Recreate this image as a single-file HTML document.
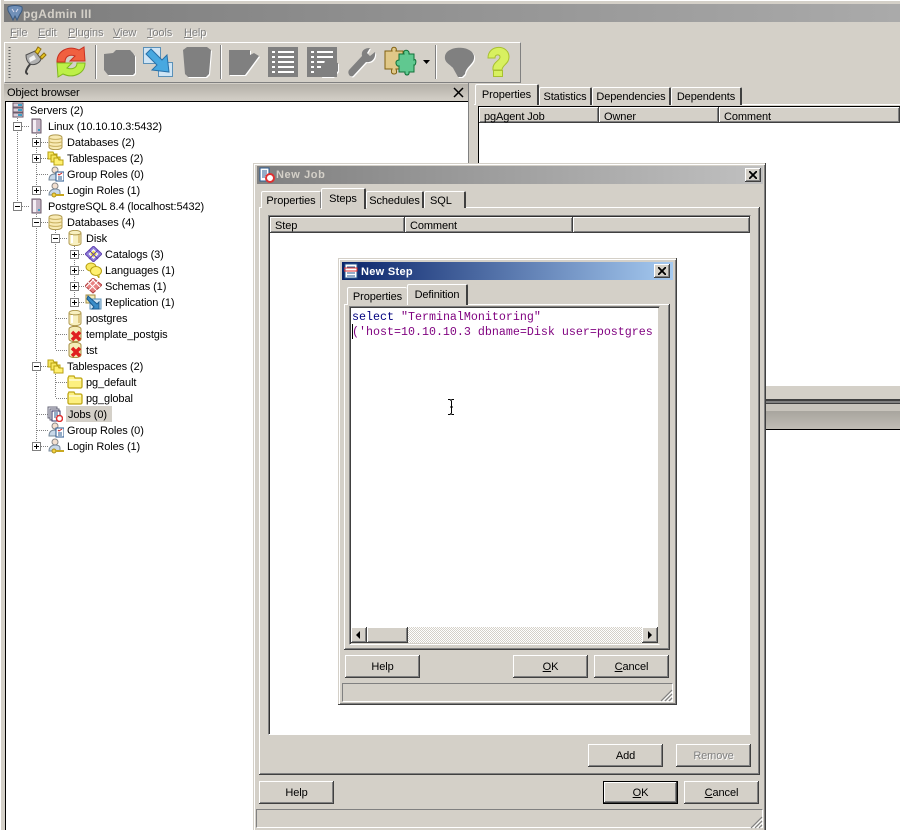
<!DOCTYPE html>
<html><head><meta charset="utf-8"><style>
html,body{margin:0;padding:0;background:#d4d0c8}
#p{position:relative;width:900px;height:830px;overflow:hidden;background:#d4d0c8;font:11px/16px "Liberation Sans",sans-serif;letter-spacing:-.1px;color:#000}
#p div,#p svg{position:absolute;box-sizing:border-box}
.t{white-space:nowrap;height:16px;margin-top:1px}
.r{background:#d4d0c8;box-shadow:inset -1px -1px #404040,inset 1px 1px #fff,inset -2px -2px #808080}
.b{background:#d4d0c8;box-shadow:inset -1px -1px #404040,inset 1px 1px #fff,inset -2px -2px #808080;text-align:center;line-height:24px;width:75px;height:23px}
.h{background:#d4d0c8;box-shadow:inset -1px -1px #404040,inset 1px 1px #fff,inset -2px -2px #808080;height:16px;line-height:19px;padding-left:5px;white-space:nowrap}
.tab{background:#d4d0c8;border-top:1px solid #fff;border-left:1px solid #fff;border-right:2px solid #404040;border-radius:2px 2px 0 0;text-align:center;white-space:nowrap;line-height:18px}
.w{background:#fff}
.win{background:#d4d0c8;box-shadow:inset -1px -1px #404040,inset 1px 1px #d4d0c8,inset 2px 2px #fff,inset -2px -2px #808080}
.x{width:16px;height:14px;background:#d4d0c8;box-shadow:inset -1px -1px #404040,inset 1px 1px #fff,inset -2px -2px #808080}
u{text-decoration:underline}
.sb{height:19px;border-top:1px solid #808080;border-left:1px solid #808080;border-right:1px solid #fff;border-bottom:1px solid #fff}
.m{color:#808080;text-shadow:1px 1px 0 #fff}
</style></head><body><div id="p">

<svg width="0" height="0" style="left:0;top:0">
<defs>
<symbol id="srvs" viewBox="0 0 16 16"><path d="M3 1h10v4H3zM3 6h10v4H3zM3 11h10v4H3z" fill="#d8ccd8" stroke="#6a5a6a"/><path d="M8 3h4M8 8h4M8 13h4" stroke="#3aa0c8" stroke-width="2"/></symbol>
<symbol id="srv" viewBox="0 0 16 16"><path d="M3 1h8l1 1v13H3z" fill="#c4b4c4" stroke="#6a5a6a"/><path d="M4 2h3v12H4z" fill="#f4eef4"/><path d="M9 11h2v2H9z" fill="#3aa0c8"/></symbol>
<symbol id="db" viewBox="0 0 16 16"><path d="M1 3.500C1 0 14 0 14 3.500V13c0 3.500-13 3.500-13 0z" fill="#f8eab4" stroke="#b09a50"/><path d="M1 7c0 2.500 13 2.500 13 0M1 10.500c0 2.500 13 2.500 13 0M1 3.500c0 2.500 13 2.500 13 0" fill="none" stroke="#c8b060"/></symbol>
<symbol id="d1" viewBox="0 0 16 16"><path d="M2 3C2-.5 14-.5 14 3v10c0 3.500-12 3.500-12 0z" fill="#f8f0c0" stroke="#b09a50"/><path d="M2 3c0 2.500 12 2.500 12 0" fill="none" stroke="#b09a50"/><path d="M5 5v8" stroke="#fff" stroke-width="2"/><path d="M12 5v8" stroke="#e0c880" stroke-width="2"/></symbol>
<symbol id="fs" viewBox="0 0 17 16"><path d="M1 2h5l1 2h3v5H1z" fill="#f8e860" stroke="#b8a010"/><path d="M4 5h5l1 2h3v5H4z" fill="#f8e860" stroke="#b8a010"/><path d="M7 8h4l1 2h4v5H7z" fill="#fff070" stroke="#b8a010"/></symbol>
<symbol id="f" viewBox="0 0 16 16"><path d="M1 4l1-2h5l1 2h6l1 1v8l-1 1H2l-1-1z" fill="#fdf080" stroke="#c0a818" stroke-width="1.300"/><path d="M2 6h12" stroke="#fff"/></symbol>
<symbol id="grp" viewBox="0 0 16 16"><circle cx="7" cy="4" r="3" fill="#f4e0d0" stroke="#888"/><path d="M1 14c0-5 3-6 6-6s5 1 5 3v3z" fill="#c8d8e8" stroke="#789"/><path d="M8 6h8v9H8z" fill="#fff" stroke="#2a5a90"/><path d="M10 8l1 1 3-2" stroke="#d02020" fill="none"/><path d="M10 11h4M10 13h4" stroke="#2a5a90"/></symbol>
<symbol id="log" viewBox="0 0 16 16"><circle cx="7" cy="4" r="3" fill="#f4e0d0" stroke="#888"/><path d="M1 13c0-4 3-6 6-6s5 1 5 3v3z" fill="#c8d8e8" stroke="#789"/><circle cx="6" cy="13" r="2" fill="#f4d040" stroke="#a89020"/><path d="M8 13h8" stroke="#c8a820" stroke-width="2"/></symbol>
<symbol id="cat" viewBox="0 0 17 16"><path d="M8.500 0L17 8l-8.500 8L0 8z" fill="#9080d8" stroke="#6040b0"/><path d="M8.500 3l5 5-5 5-5-5z" fill="#fff"/><path d="M5 8l3.500-3.500L12 8l-3.500 3.500z" fill="#f0e040"/><path d="M4 4l9 9M13 4l-9 9" stroke="#6040b0"/></symbol>
<symbol id="lng" viewBox="0 0 17 16"><ellipse cx="6" cy="5" rx="5" ry="4" fill="#f8e860" stroke="#b8a010"/><ellipse cx="11" cy="9" rx="5.500" ry="4.500" fill="#fff070" stroke="#b8a010"/><path d="M12 13l2 3 0-3" fill="#fff070" stroke="#b8a010"/></symbol>
<symbol id="sch" viewBox="0 0 17 16"><path d="M8 0l9 7-9 8-8-7z" fill="#e88080" stroke="#b04040"/><path d="M3 4l9 9M7 1l8 8M13 3l-9 9M9 1L1 9" stroke="#fff"/></symbol>
<symbol id="rep" viewBox="0 0 17 16"><path d="M1 1h9v8H1z" fill="#f4ecb8" stroke="#a68c40"/><path d="M5 5h11v10H5z" fill="#cfe4f4" stroke="#5a90b8"/><path d="M3 2l9 8 2-2v7H7l2-2-7-8z" fill="#3a8cc8" stroke="#1a5a90"/></symbol>
<symbol id="bad" viewBox="0 0 16 16"><path d="M2 3C2-.5 14-.5 14 3v10c0 3.500-12 3.500-12 0z" fill="#f4ecb8" stroke="#a68c40"/><path d="M5 6l8 8M13 6l-8 8" stroke="#e02020" stroke-width="3.500"/></symbol>
<symbol id="job" viewBox="0 0 16 16"><path d="M1 1h9v11H1z" fill="#e8e8f0" stroke="#667"/><path d="M3 3h9v11H3z" fill="#e8e8f0" stroke="#667"/><path d="M5 5h8v10H5z" fill="#fff" stroke="#336"/><path d="M7 7h4M7 9h4M7 11h2" stroke="#2a5a90"/><circle cx="12.500" cy="12.500" r="3" fill="#fff" stroke="#e03030" stroke-width="1.500"/></symbol>
<path id="tb1" d="M104 54l9-1 3-3h14l3 3 2 3v17l-2 2H108l-4-5z"/>
<path id="tb2" d="M183 50l4-3h20l4 3-2 24-3 3h-18l-3-3z"/>
<path id="tb3" d="M229 50h21v5l4-2 5 3-11 15-3 4h-16z"/>
<path id="tb4" d="M349 70l13-14c-1-5 2-8 8-8l-3 5 3 3 5-4c1 6-3 11-9 10l-13 14c-3 2-6-3-4-6z"/>
<path id="tb5" d="M445 56C447 45 472 45 474 56 475 64 466 66 465 74L462 77H458L453 68C449 64 444 62 445 56z"/>
<path id="tb6" d="M325 60l13 3v8l-5 6h-12z"/>
</defs>
</svg>

<!-- main title -->
<div style="left:0;top:0;width:900px;height:4px;background:#d4d0c8;border-top:1px solid #fff"></div>
<div style="left:0;top:0;width:4px;height:830px;background:#d4d0c8;border-left:1px solid #fff"></div>
<div style="left:4px;top:4px;width:896px;height:18px;background:linear-gradient(90deg,#7c7c7c,#aaa)"></div>
<svg style="left:6px;top:4px" width="18" height="18" viewBox="0 0 18 18"><path d="M2 3c3-2 11-2 14 0 1 5-2 6-3 9l-2 4-2-4-2 4-2-4C4 9 1 8 2 3z" fill="#7090b8" stroke="#3a5a80"/><path d="M6 5l2 3M12 5l-2 3" stroke="#dde"/></svg>
<div class="t" style="left:23px;top:5px;font-weight:bold;color:#d4d0c8;font-size:12px;letter-spacing:.3px">pgAdmin III</div>

<!-- menu -->
<div class="t m" style="left:10px;top:24px"><u>F</u>ile</div>
<div class="t m" style="left:38px;top:24px"><u>E</u>dit</div>
<div class="t m" style="left:68px;top:24px"><u>P</u>lugins</div>
<div class="t m" style="left:113px;top:24px"><u>V</u>iew</div>
<div class="t m" style="left:147px;top:24px"><u>T</u>ools</div>
<div class="t m" style="left:184px;top:24px"><u>H</u>elp</div>

<!-- toolbar -->
<div style="left:4px;top:42px;width:517px;height:41px;border-top:1px solid #fff;border-left:1px solid #fff;border-right:1px solid #808080;border-bottom:1px solid #808080"></div>
<svg style="left:0;top:42px" width="530" height="41" viewBox="0 42 530 41">
<path d="M9.500 47v31" stroke="#606060" stroke-width="2" stroke-dasharray="1 2"/>
<path d="M95.500 45v34M220.500 45v34M435.500 45v34" stroke="#808080"/><path d="M96.500 45v34M221.500 45v34M436.500 45v34" stroke="#fff"/>
<!-- plug -->
<path d="M28 74c-4-1-1-5 0-7l3-4" fill="none" stroke="#404040" stroke-width="2"/>
<path d="M26 55l9-4 6 8c-1 4-7 7-11 5-3-2-4-6-4-9z" fill="#b0b0b0" stroke="#505050"/><path d="M29 58l5-3 2 4-6 3z" fill="#f0f0f0"/>
<path d="M35 52l3-5 3 2-3 5zM40 57l4-4 2 2-4 4z" fill="#e8c820" stroke="#907010"/>
<!-- refresh -->
<path d="M57 62C57 51 68 45 79 50L84 47 85 61H70L75 56C70 54 65 56 65 62Z" fill="#f06040" stroke="#c83020"/>
<path d="M85 63C85 73 74 79 63 74L58 77 57 63H72L67 68C72 70 77 68 77 63Z" fill="#bdf048" stroke="#80b820"/>
<!-- disabled -->
<g fill="#fff" transform="translate(1 1)"><use href="#tb1"/><use href="#tb2"/><use href="#tb3"/><use href="#tb4"/><use href="#tb5"/><use href="#tb6"/></g>
<g fill="#808080"><use href="#tb1"/><use href="#tb2"/><use href="#tb3"/><use href="#tb4"/><use href="#tb5"/></g>
<!-- copy blue -->
<path d="M143.500 47.500h17v16h-17zM158.500 62.500h14v14h-14z" fill="#cfe4f4" stroke="#5a90b8"/>
<path d="M146 54l5-5 11 11 5-5 2 17-17-2 5-5z" fill="#48a8e0" stroke="#2870a8"/>
<!-- list -->
<rect x="268" y="47" width="30" height="30" fill="#808080"/>
<path d="M272 52h3M278 52h16M272 57h3M278 57h16M272 62h3M278 62h16M272 67h3M278 67h16M272 72h3M278 72h16" stroke="#fff" stroke-width="2"/>
<rect x="307" y="47" width="30" height="30" fill="#808080"/>
<path d="M311 52h3M317 52h16M311 57h3M317 57h16M311 62h3M317 62h8M311 67h3M317 67h4M311 72h3" stroke="#fff" stroke-width="2"/>
<use href="#tb6" fill="#808080"/>
<!-- puzzle -->
<path d="M385 51h7c-2-5 6-5 4 0h7v18h-7c1 3 1 5-2 5s-3-3-2-5h-7z" fill="#e0c888" stroke="#806010"/>
<path d="M399 54h5c-2-5 6-5 5 0h5v6c3-2 2 6 0 5v7h-5c1 4-5 4-4 0h-6v-6c-3 1-5-6 0-6z" fill="#60c890" stroke="#107038"/>
<path d="M423 60h7l-3.500 4z" fill="#000"/>
<!-- question -->
<path d="M488 58c0-14 21-14 21-1 0 7-7 8-7 13h-9c-1-8 7-9 7-13 0-3-5-3-5 1z" fill="#d8f060" stroke="#a8c030"/>
<rect x="493.500" y="70.500" width="9" height="6" fill="#d8f060" stroke="#a8c030"/>
</svg>

<!-- object browser header -->
<div style="left:4px;top:84px;width:465px;height:17px;background:linear-gradient(#b4b0a8,#d4d0c8)"></div>
<div class="t" style="left:7px;top:84px">Object browser</div>
<svg style="left:453px;top:87px" width="11" height="11" viewBox="0 0 11 11"><path d="M1 1l9 9M10 1l-9 9" stroke="#000" stroke-width="1.500"/></svg>

<!-- tree -->
<div class="w" style="left:5px;top:101px;width:463px;height:729px;border-top:1px solid #000;border-left:1px solid #000"></div>

<svg style="left:0;top:100px" width="260" height="360" viewBox="0 100 260 360">
<g stroke="#808080" stroke-dasharray="1 1" fill="none" shape-rendering="crispEdges">
<path d="M17.500 116v86M22 126.500h8M22 206.500h8M18 110.500h-1"/>
<path d="M36.500 132v54M41 142.500h7M41 158.500h7M37 174.500h11M41 190.500h7"/>
<path d="M36.500 212v230M41 222.500h7M41 366.500h7M37 414.500h11M37 430.500h11M41 446.500h7"/>
<path d="M55.500 228v122M60 238.500h7M56 318.500h11M56 334.500h11M56 350.500h11"/>
<path d="M55.500 372v26M56 382.500h11M56 398.500h11"/>
<path d="M74.500 244v58M79 254.500h6M79 270.500h6M79 286.500h6M79 302.500h6"/>
</g>
<g fill="#fff" stroke="#808080" shape-rendering="crispEdges">
<rect x="13.500" y="122.500" width="8" height="8"/><rect x="13.500" y="202.500" width="8" height="8"/>
<rect x="32.500" y="138.500" width="8" height="8"/><rect x="32.500" y="154.500" width="8" height="8"/><rect x="32.500" y="186.500" width="8" height="8"/>
<rect x="32.500" y="218.500" width="8" height="8"/><rect x="32.500" y="362.500" width="8" height="8"/><rect x="32.500" y="442.500" width="8" height="8"/>
<rect x="51.500" y="234.500" width="8" height="8"/>
<rect x="70.500" y="250.500" width="8" height="8"/><rect x="70.500" y="266.500" width="8" height="8"/><rect x="70.500" y="282.500" width="8" height="8"/><rect x="70.500" y="298.500" width="8" height="8"/>
</g>
<g stroke="#000" fill="none" shape-rendering="crispEdges">
<path d="M15 126.500h5M15 206.500h5M34 142.500h5M36.500 140v5M34 158.500h5M36.500 156v5M34 190.500h5M36.500 188v5M34 222.500h5M34 366.500h5M34 446.500h5M36.500 444v5M53 238.500h5"/>
<path d="M72 254.500h5M74.500 252v5M72 270.500h5M74.500 268v5M72 286.500h5M74.500 284v5M72 302.500h5M74.500 300v5"/>
</g>
<use href="#srvs" x="10" y="102" width="16" height="16"/>
<use href="#srv" x="29" y="118" width="16" height="16"/>
<use href="#db" x="48" y="134" width="16" height="16"/>
<use href="#fs" x="47" y="150" width="17" height="16"/>
<use href="#grp" x="48" y="166" width="16" height="16"/>
<use href="#log" x="48" y="182" width="16" height="16"/>
<use href="#srv" x="29" y="198" width="16" height="16"/>
<use href="#db" x="48" y="214" width="16" height="16"/>
<use href="#d1" x="67" y="230" width="16" height="16"/>
<use href="#cat" x="85" y="246" width="17" height="16"/>
<use href="#lng" x="85" y="262" width="17" height="16"/>
<use href="#sch" x="85" y="278" width="17" height="16"/>
<use href="#rep" x="85" y="294" width="17" height="16"/>
<use href="#d1" x="67" y="310" width="16" height="16"/>
<use href="#bad" x="67" y="326" width="16" height="16"/>
<use href="#bad" x="67" y="342" width="16" height="16"/>
<use href="#fs" x="47" y="358" width="17" height="16"/>
<use href="#f" x="67" y="374" width="16" height="16"/>
<use href="#f" x="67" y="390" width="16" height="16"/>
<use href="#job" x="47" y="406" width="16" height="16"/>
<use href="#grp" x="48" y="422" width="16" height="16"/>
<use href="#log" x="48" y="438" width="16" height="16"/>
</svg>

<div style="left:66px;top:406px;width:46px;height:16px;background:#d4d0c8"></div>
<div class="t" style="left:30px;top:102px">Servers (2)</div>
<div class="t" style="left:48px;top:118px">Linux (10.10.10.3:5432)</div>
<div class="t" style="left:67px;top:134px">Databases (2)</div>
<div class="t" style="left:67px;top:150px">Tablespaces (2)</div>
<div class="t" style="left:67px;top:166px">Group Roles (0)</div>
<div class="t" style="left:67px;top:182px">Login Roles (1)</div>
<div class="t" style="left:48px;top:198px">PostgreSQL 8.4 (localhost:5432)</div>
<div class="t" style="left:67px;top:214px">Databases (4)</div>
<div class="t" style="left:86px;top:230px">Disk</div>
<div class="t" style="left:105px;top:246px">Catalogs (3)</div>
<div class="t" style="left:105px;top:262px">Languages (1)</div>
<div class="t" style="left:105px;top:278px">Schemas (1)</div>
<div class="t" style="left:105px;top:294px">Replication (1)</div>
<div class="t" style="left:86px;top:310px">postgres</div>
<div class="t" style="left:86px;top:326px">template_postgis</div>
<div class="t" style="left:86px;top:342px">tst</div>
<div class="t" style="left:67px;top:358px">Tablespaces (2)</div>
<div class="t" style="left:86px;top:374px">pg_default</div>
<div class="t" style="left:86px;top:390px">pg_global</div>
<div class="t" style="left:68px;top:406px">Jobs (0)</div>
<div class="t" style="left:67px;top:422px">Group Roles (0)</div>
<div class="t" style="left:67px;top:438px">Login Roles (1)</div>

<!-- splitter -->
<div style="left:468px;top:83px;width:6px;height:747px;background:#d4d0c8;border-left:1px solid #808080"></div>

<!-- right pane -->
<div style="left:474px;top:104px;width:426px;height:1px;background:#fff"></div>
<div class="tab" style="left:475px;top:84px;width:64px;height:21px;line-height:20px;z-index:2">Properties</div>
<div class="tab" style="left:539px;top:87px;width:53px;height:18px">Statistics</div>
<div class="tab" style="left:592px;top:87px;width:79px;height:18px">Dependencies</div>
<div class="tab" style="left:671px;top:87px;width:71px;height:18px">Dependents</div>
<div style="left:478px;top:106px;width:422px;height:280px;background:#fff;border-top:1px solid #000;border-left:1px solid #000"></div>
<div class="h" style="left:479px;top:107px;width:120px;line-height:21px">pgAgent Job</div>
<div class="h" style="left:599px;top:107px;width:120px;line-height:21px">Owner</div>
<div class="h" style="left:719px;top:107px;width:181px;line-height:21px">Comment</div>
<div style="left:740px;top:385px;width:160px;height:1px;background:#fff"></div>
<div style="left:740px;top:399px;width:160px;height:2px;background:#404040"></div>
<div style="left:740px;top:401px;width:160px;height:2px;background:#808080"></div>
<div style="left:740px;top:403px;width:160px;height:1px;background:#404040"></div>
<div style="left:740px;top:404px;width:160px;height:7px;background:#c8c4bc"></div>
<div style="left:740px;top:411px;width:160px;height:18px;background:linear-gradient(#a8a59e,#c0bdb5)"></div>
<div style="left:740px;top:429px;width:160px;height:1px;background:#000"></div>
<div style="left:740px;top:430px;width:160px;height:400px;background:#fff"></div>

<!-- New Job -->
<div class="win" style="left:253px;top:163px;width:513px;height:680px"></div>
<div style="left:257px;top:166px;width:506px;height:18px;background:linear-gradient(90deg,#808080,#c0c0c0)"></div>
<svg style="left:259px;top:167px" width="16" height="16" viewBox="0 0 16 16"><path d="M1 1h9v13H1z" fill="#fff" stroke="#2a5a90"/><path d="M3 4h5M3 6h5M3 8h5M3 10h3" stroke="#2a5a90"/><circle cx="11" cy="11" r="4" fill="#fff" stroke="#e03030" stroke-width="2"/></svg>
<div class="t" style="left:276px;top:166px;font-weight:bold;color:#d4d0c8;letter-spacing:.6px">New Job</div>
<div class="x" style="left:745px;top:168px"><svg style="left:4px;top:3px" width="8" height="8" viewBox="0 0 8 8"><path d="M0 0l8 8M8 0L0 8" stroke="#000" stroke-width="1.800"/></svg></div>

<div style="left:259px;top:207px;width:501px;height:568px;background:#d4d0c8;box-shadow:inset -1px -1px #404040,inset 1px 1px #fff,inset -2px -2px #808080"></div>
<div class="tab" style="left:261px;top:191px;width:60px;height:17px;border-right:1px solid #808080">Properties</div>
<div class="tab" style="left:321px;top:188px;width:45px;height:21px;line-height:21px;z-index:2;background:#d4d0c8">Steps</div>
<div class="tab" style="left:366px;top:191px;width:58px;height:17px">Schedules</div>
<div class="tab" style="left:424px;top:191px;width:42px;height:17px;text-align:left;padding-left:5px">SQL</div>
<div style="left:268px;top:215px;width:483px;height:520px;background:#fff;border-top:1px solid #808080;border-left:1px solid #808080;border-right:1px solid #d4d0c8;border-bottom:1px solid #fff;box-shadow:inset 1px 1px #303030"></div>
<div class="h" style="left:270px;top:217px;width:135px">Step</div>
<div class="h" style="left:405px;top:217px;width:168px">Comment</div>
<div class="h" style="left:573px;top:217px;width:177px"></div>
<div class="b" style="left:588px;top:744px">Add</div>
<div class="b" style="left:676px;top:744px;color:#808080;text-shadow:1px 1px 0 #fff">Remove</div>
<div class="b" style="left:259px;top:781px">Help</div>
<div class="b" style="left:603px;top:781px;box-shadow:inset 0 0 0 1px #000,inset -2px -2px #404040,inset 2px 2px #fff,inset -3px -3px #808080"><u>O</u>K</div>
<div class="b" style="left:684px;top:781px"><u>C</u>ancel</div>
<div class="sb" style="left:256px;top:809px;width:507px"></div>
<svg style="left:750px;top:816px" width="13" height="13" viewBox="0 0 13 13"><path d="M12 1L1 12M12 5l-7 7M12 9l-3 3" stroke="#808080" stroke-width="1.200"/><path d="M12 3l-9 9M12 7l-5 5M12 11l-1 1" stroke="#fff"/></svg>

<!-- New Step -->
<div class="win" style="left:338px;top:258px;width:339px;height:447px"></div>
<div style="left:342px;top:262px;width:331px;height:18px;background:linear-gradient(90deg,#0a246a,#a6caf0)"></div>
<svg style="left:344px;top:263px" width="16" height="16" viewBox="0 0 16 16"><rect x="1" y="1" width="12" height="14" fill="#fff" stroke="#2a5a90"/><path d="M3 4h8M3 10h8M3 13h8" stroke="#2a5a90"/><rect x="0" y="5" width="13" height="3" fill="none" stroke="#e03030"/></svg>
<div class="t" style="left:361px;top:263px;font-weight:bold;color:#fff;letter-spacing:.3px">New Step</div>
<div class="x" style="left:654px;top:264px"><svg style="left:4px;top:3px" width="8" height="8" viewBox="0 0 8 8"><path d="M0 0l8 8M8 0L0 8" stroke="#000" stroke-width="1.800"/></svg></div>

<div style="left:344px;top:304px;width:326px;height:346px;background:#d4d0c8;box-shadow:inset -1px -1px #404040,inset 1px 1px #fff,inset -2px -2px #808080"></div>
<div class="tab" style="left:347px;top:287px;width:60px;height:18px;border-right:none;line-height:18px">Properties</div>
<div class="tab" style="left:407px;top:284px;width:61px;height:21px;line-height:21px;z-index:2">Definition</div>
<div style="left:349px;top:306px;width:311px;height:339px;border-top:1px solid #808080;border-left:1px solid #808080;border-right:1px solid #d4d0c8;border-bottom:1px solid #fff;box-shadow:inset 1px 1px #404040"></div>
<div class="w" style="left:351px;top:308px;width:307px;height:319px"></div>
<div style="left:352px;top:309px;font:11.670px/16px 'Liberation Mono',monospace;letter-spacing:0;color:#00007f;white-space:pre">select <span style="color:#7f007f">"TerminalMonitoring"</span></div>
<div style="left:352px;top:324px;font:11.670px/16px 'Liberation Mono',monospace;letter-spacing:0;color:#7f007f;white-space:pre">('host=10.10.10.3 dbname=Disk user=postgres</div>
<div style="left:352px;top:324px;width:1px;height:15px;background:#000"></div>
<svg style="left:447px;top:399px" width="9" height="16" viewBox="0 0 9 16"><path d="M1 .500h2l1 1 1-1h2M4.500 2v12M1 15.500h2l1-1 1 1h2M3 8h3" stroke="#000" fill="none"/></svg>
<div style="left:351px;top:627px;width:307px;height:16px;background:repeating-conic-gradient(#fff 0 25%,#d4d0c8 0 50%) 0 0/2px 2px"></div>
<div class="r" style="left:351px;top:627px;width:16px;height:16px"></div>
<div class="r" style="left:367px;top:627px;width:41px;height:16px"></div>
<div class="r" style="left:642px;top:627px;width:16px;height:16px"></div>
<svg style="left:351px;top:627px" width="307" height="16" viewBox="0 0 307 16"><path d="M9 4v8L5 8zM297 4v8l4-4z" fill="#000"/></svg>
<div class="b" style="left:345px;top:655px">Help</div>
<div class="b" style="left:513px;top:655px"><u>O</u>K</div>
<div class="b" style="left:594px;top:655px"><u>C</u>ancel</div>
<div class="sb" style="left:342px;top:683px;width:331px"></div>
<svg style="left:660px;top:689px" width="13" height="13" viewBox="0 0 13 13"><path d="M12 1L1 12M12 5l-7 7M12 9l-3 3" stroke="#808080" stroke-width="1.200"/><path d="M12 3l-9 9M12 7l-5 5M12 11l-1 1" stroke="#fff"/></svg>

</div></body></html>
